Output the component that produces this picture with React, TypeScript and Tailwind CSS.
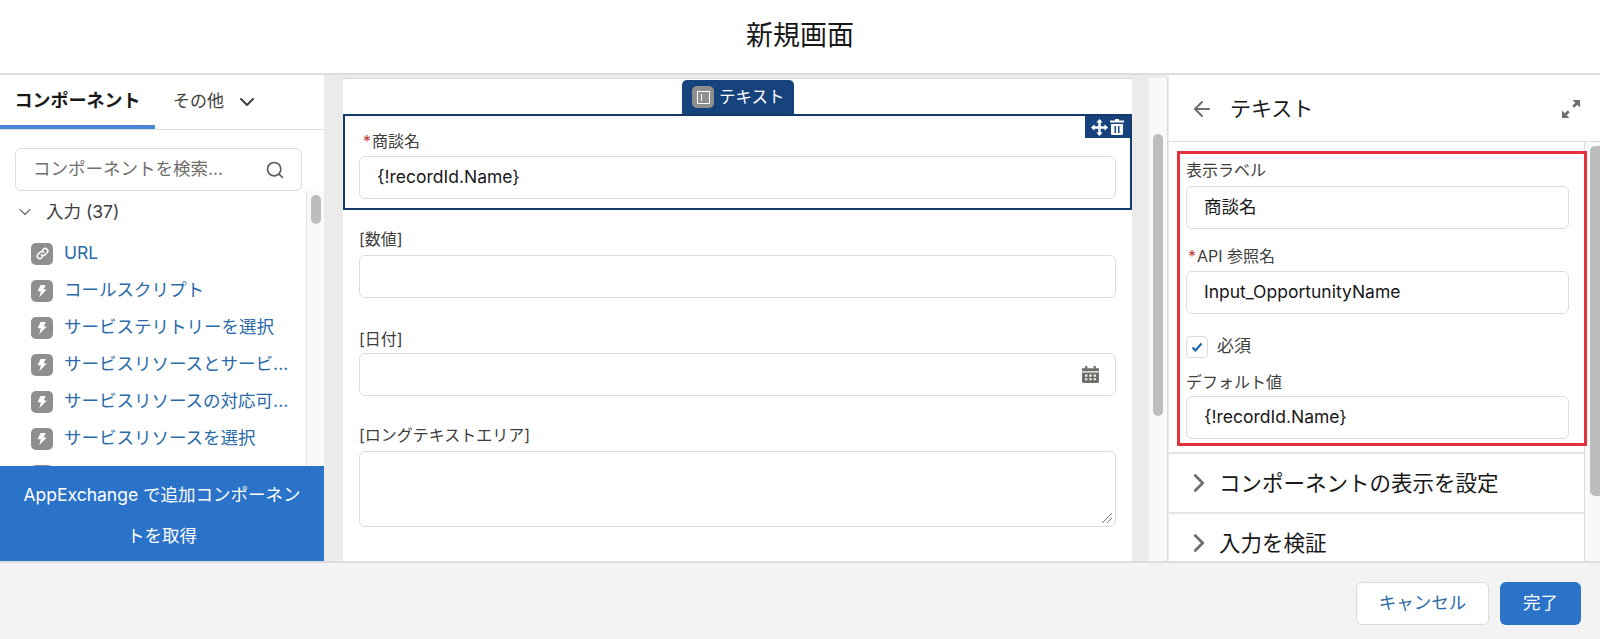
import type { ReactNode } from 'react';
import { ArrowLeft, ChevronDown, ChevronRight, Search } from 'lucide-react';

const COMPONENTS = [
  'コールスクリプト',
  'サービステリトリーを選択',
  'サービスリソースとサービ...',
  'サービスリソースの対応可...',
  'サービスリソースを選択',
  'サービス予定を選択',
];

function BoltBadge() {
  return (
    <span className="flex h-[22px] w-[22px] shrink-0 items-center justify-center rounded-[5px] bg-[#8f8f8f]">
      <svg viewBox="0 0 14 14" className="h-[14px] w-[14px]" fill="#fff">
        <path d="M5.6 1h5.2L8.6 5.4h3.2L4.2 13.2l1.7-5.9H2.6z" />
      </svg>
    </span>
  );
}

function LinkBadge() {
  return (
    <span className="flex h-[22px] w-[22px] shrink-0 items-center justify-center rounded-[5px] bg-[#8f8f8f]">
      <svg viewBox="0 0 14 14" className="h-[15px] w-[15px]" fill="none" stroke="#fff" strokeWidth="1.5" strokeLinecap="round">
        <path d="M6 8.2a2.3 2.3 0 0 0 3.3 0l1.9-1.9a2.3 2.3 0 0 0-3.3-3.3l-.8.8" />
        <path d="M8 5.8a2.3 2.3 0 0 0-3.3 0L2.8 7.7A2.3 2.3 0 0 0 6.1 11l.8-.8" />
      </svg>
    </span>
  );
}

interface FieldProps {
  label: string;
  required?: boolean;
  value?: string;
  className?: string;
  labelClass?: string;
  children?: ReactNode;
}

function Field({ label, required, value, className, labelClass = 'h-[27px]', children }: FieldProps) {
  return (
    <div className={className}>
      <div className={`${labelClass} text-[16px] leading-[26px] text-[#3e3e3c]`}>
        {required && <span className="ml-[2px] mr-[1px] text-[#c23934]">*</span>}
        {label}
      </div>
      <div className="flex h-[43px] items-center rounded-[6px] border border-[#dddbda] bg-white px-[17px] text-[17.500px] text-[#181818]">
        {value}
        {children}
      </div>
    </div>
  );
}

function Section({ title }: { title: string }) {
  return (
    <div className="flex h-[60px] shrink-0 items-center border-b-2 border-[#e6e6e6] pl-[15px]">
      <ChevronRight className="h-[30px] w-[30px] text-[#706e6b]" strokeWidth={2.2} />
      <span className="ml-[5px] text-[21.500px] text-[#181818]">{title}</span>
    </div>
  );
}

export default function App() {
  return (
    <div className="flex h-[639px] w-[1600px] flex-col overflow-hidden bg-white font-['Inter','Noto_Sans_CJK_JP',sans-serif]">
      {/* Header */}
      <header className="flex h-[75px] shrink-0 items-center justify-center border-b-2 border-[#dddddd] text-[27px] text-[#181818]">
        新規画面
      </header>

      <div className="flex h-[486px] shrink-0">
        {/* Component palette */}
        <aside className="flex w-[324px] shrink-0 flex-col bg-white">
          <div className="flex h-[55px] shrink-0 border-b border-[#dddbda]">
            <div className="flex w-[155px] items-center justify-center border-b-[4px] border-[#4a86d8] text-[18px] font-bold text-[#181818]">
              コンポーネント
            </div>
            <div className="ml-[18px] flex items-center text-[17px] text-[#3e3e3c]">
              その他
              <ChevronDown className="ml-[11px] h-[24px] w-[24px] text-[#3e3e3c]" strokeWidth={2} />
            </div>
          </div>
          <div className="shrink-0 px-[15px] pt-[18px]">
            <div className="flex h-[43px] w-[287px] items-center justify-between rounded-[6px] border border-[#dddbda] pl-[17px] pr-[16px] text-[17.500px] text-[#706e6b]">
              コンポーネントを検索...
              <Search className="h-[20px] w-[20px] text-[#5c5c5c]" strokeWidth={2} />
            </div>
          </div>
          <div className="flex min-h-0 flex-1">
            <div className="min-w-0 flex-1 overflow-hidden">
              <div className="flex h-[44px] items-center pb-[2px] pl-[15px] text-[17.500px] text-[#3e3e3c]">
                <ChevronDown className="h-[20px] w-[20px] text-[#706e6b]" strokeWidth={1.5} />
                <span className="ml-[11px]">入力 (37)</span>
              </div>
              <div className="flex h-[37px] items-center gap-[11px] pl-[31px] text-[17.500px] text-[#2a6aa8]">
                <LinkBadge />
                URL
              </div>
              {COMPONENTS.map((name) => (
                <div key={name} className="flex h-[37px] items-center gap-[11px] pl-[31px] text-[17.500px] whitespace-nowrap text-[#2a6aa8]">
                  <BoltBadge />
                  {name}
                </div>
              ))}
            </div>
            <div className="w-[18px] shrink-0 border-l border-[#e5e5e5] bg-[#f9f9fb] pl-[4px] pt-[4px]">
              <div className="h-[29px] w-[10px] rounded-[5px] bg-[#bdbdbd]" />
            </div>
          </div>
          <div className="h-[95px] shrink-0 bg-[#2b72c9] px-[18px] py-[8px] text-center text-[17.500px] leading-[41px] text-white">
            AppExchange で追加コンポーネントを取得
          </div>
        </aside>

        {/* Canvas */}
        <main className="flex flex-1 bg-[#ecebea] pl-[19px] pt-[3px]">
          <div className="h-full w-[789px] shrink-0 border-t border-[#dddbda] bg-white">
            <div className="ml-[339px] mt-[1px] flex h-[34px] w-[112px] items-center gap-[5px] rounded-t-[5px] bg-[#16437c] pl-[10px] text-[16.500px] text-white">
              <span className="flex h-[22px] w-[22px] items-center justify-center rounded-[5px] bg-[#8f8f8f]">
                <span className="flex h-[13px] w-[13px] items-center border-[1.5px] border-white pl-[3px]">
                  <span className="h-[7px] w-[1.5px] bg-white" />
                </span>
              </span>
              テキスト
            </div>
            <div className="relative h-[96px] border-2 border-[#153a6d] px-[14px] pt-[12px]">
              <div className="absolute right-0 top-0 flex h-[22px] w-[45px] items-center justify-center gap-[2px] bg-[#16437c]">
                <svg viewBox="0 0 16 16" className="h-[17px] w-[17px]" fill="#fff">
                  <path d="M8 0l3 3.300H9.200v3.500h3.500V5l3.300 3-3.300 3V9.200H9.200v3.500H11L8 16l-3-3.300h1.800V9.200H3.300V11L0 8l3.300-3v1.800h3.500V3.300H5z" />
                </svg>
                <svg viewBox="0 0 14 16" className="h-[16px] w-[14px]" fill="#fff">
                  <path d="M5 0h4v1.500h5V3.500H0V1.500h5zM1 5h12v9.500a1.500 1.500 0 0 1-1.500 1.500h-9A1.500 1.500 0 0 1 1 14.500zM4.500 7v7H6V7zM8 7v7h1.500V7z" />
                </svg>
              </div>
              <Field label="商談名" required labelClass="h-[28px] pl-[2px]" value="{!recordId.Name}" />
            </div>
            <div className="px-[16px]">
              <Field label="[数値]" labelClass="h-[29px]" className="mt-[16px]" />
              <Field label="[日付]" className="mt-[28px]">
                <svg viewBox="0 0 16 16" className="-mr-[1px] ml-auto h-[17px] w-[17px]" fill="#706e6b">
                  <path d="M3 0h2v2h6V0h2v2h3v3H0V2h3zM0 6h16v8.500a1.500 1.500 0 0 1-1.500 1.500h-13A1.500 1.500 0 0 1 0 14.500zM3 8v2h2V8zM7 8v2h2V8zM11 8v2h2V8zM3 11.500v2h2v-2zM7 11.500v2h2v-2zM11 11.500v2h2v-2z" fillRule="evenodd" />
                </svg>
              </Field>
              <div className="mt-[26px]">
                <div className="h-[29px] text-[16px] leading-[26px] text-[#3e3e3c]">[ロングテキストエリア]</div>
                <div className="relative h-[76px] rounded-[6px] border border-[#dddbda]">
                  <svg viewBox="0 0 10 10" className="absolute bottom-[3px] right-[3px] h-[10px] w-[10px]" stroke="#777" strokeWidth="1" fill="none">
                    <path d="M0 10L10 0M5 10l5-5" />
                  </svg>
                </div>
              </div>
            </div>
          </div>
          <div className="w-[17px] shrink-0" />
          <div className="w-[19px] shrink-0 border-r border-[#dddbda] bg-[#f9f9f9] pl-[4px] pt-[56px]">
            <div className="h-[282px] w-[10px] rounded-[5px] bg-[#bdbdbd]" />
          </div>
        </main>

        {/* Properties */}
        <aside className="flex w-[431px] shrink-0 flex-col overflow-hidden bg-white">
          <div className="flex h-[67px] shrink-0 items-center justify-between border-b border-[#dddbda] pl-[21px] pr-[20px] pt-[2px]">
            <div className="flex items-center gap-[16px] text-[21px] text-[#181818]">
              <ArrowLeft className="h-[24px] w-[24px] text-[#706e6b]" strokeWidth={2} />
              テキスト
            </div>
            <svg viewBox="0 0 18 18" className="h-[18px] w-[18px]" fill="#706e6b">
              <path d="M10.500 0H18v7.500l-2.800-2.800-3 3-1.900-1.900 3-3zM0 10.500l2.800 2.800 3-3 1.900 1.900-3 3L7.500 18H0z" />
            </svg>
          </div>
          <div className="flex min-h-0 flex-1">
            <div className="w-[416px] shrink-0 border-r border-[#dddbda]">
              <div className="relative z-10 ml-[8px] mt-[9px] h-[295px] w-[410px] border-[3px] border-[#e3303c] pl-[6px] pr-[15px]">
                <Field label="表示ラベル" labelClass="h-[29px]" value="商談名" className="mt-[3px]" />
                <Field label="API 参照名" required labelClass="h-[28px]" value="Input_OpportunityName" className="mt-[14px]" />
                <div className="mt-[21px] flex h-[23px] items-center gap-[9px] text-[17px] text-[#3e3e3c]">
                  <span className="flex h-[22px] w-[22px] items-center justify-center rounded-[4px] border border-[#dddbda]">
                    <svg viewBox="0 0 12 12" className="h-[12px] w-[12px]" fill="none" stroke="#1b6ab5" strokeWidth="2.200">
                      <path d="M1.500 6.500l3 3 6-7" />
                    </svg>
                  </span>
                  必須
                </div>
                <Field label="デフォルト値" value="{!recordId.Name}" className="mt-[11px]" />
              </div>
              <div className="mt-[6px] border-t-2 border-[#e6e6e6]">
                <Section title="コンポーネントの表示を設定" />
                <Section title="入力を検証" />
              </div>
            </div>
            <div className="flex-1 bg-[#f9f9f9] pl-[5px] pt-[4px]">
              <div className="h-[350px] w-[10px] rounded-l-[5px] bg-[#bdbdbd]" />
            </div>
          </div>
        </aside>
      </div>

      {/* Footer */}
      <footer className="flex flex-1 items-start justify-end gap-[11px] border-t-2 border-[#dddddd] bg-[#f3f3f3] pr-[19px] pt-[19px] text-[17.500px]">
        <button className="h-[43px] w-[133px] rounded-[6px] border border-[#dddbda] bg-white text-[#2a6aa8]">キャンセル</button>
        <button className="h-[43px] w-[81px] rounded-[6px] bg-[#2b72c9] text-white">完了</button>
      </footer>
    </div>
  );
}
